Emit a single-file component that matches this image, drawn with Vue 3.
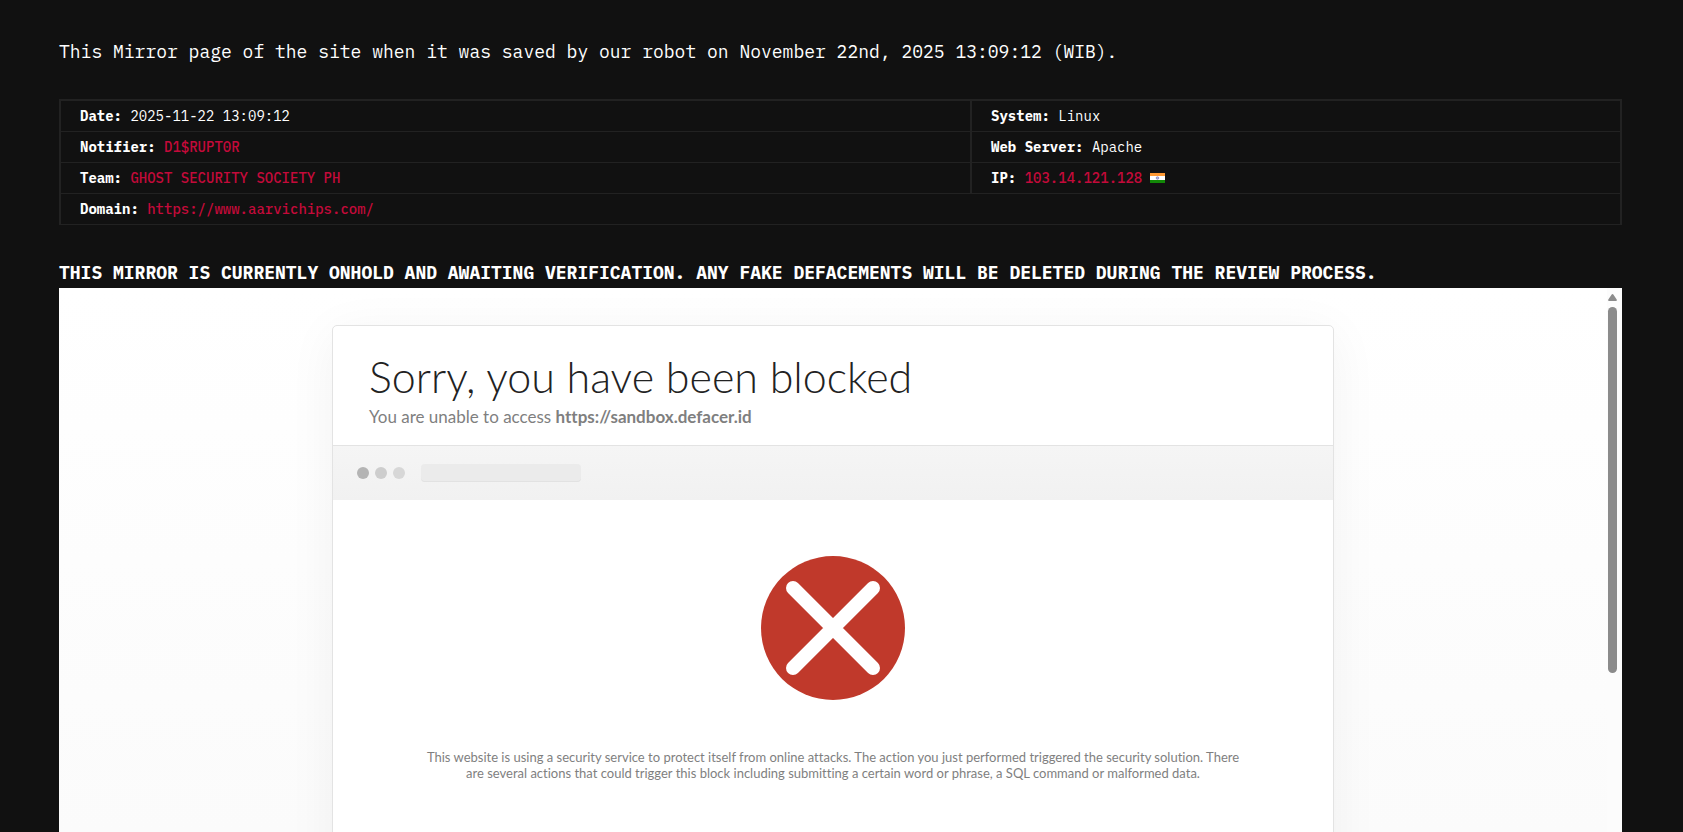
<script setup>
const rows = [
  [
    { label: 'Date:', value: '2025-11-22 13:09:12' },
    { label: 'System:', value: 'Linux' },
  ],
  [
    { label: 'Notifier:', value: 'D1$RUPT0R', link: true },
    { label: 'Web Server:', value: 'Apache' },
  ],
  [
    { label: 'Team:', value: 'GHOST SECURITY SOCIETY PH', link: true },
    { label: 'IP:', value: '103.14.121.128', link: true, flag: true },
  ],
  [{ label: 'Domain:', value: 'https://www.aarvichips.com/', link: true }],
]
</script>

<template>
  <main class="page">
    <p class="intro">This Mirror page of the site when it was saved by our robot on November 22nd, 2025 13:09:12 (WIB).</p>

    <table class="info">
      <colgroup>
        <col class="col-main" />
        <col />
      </colgroup>
      <tbody>
        <tr v-for="(row, i) in rows" :key="i">
          <td v-for="cell in row" :key="cell.label" :colspan="row.length === 1 ? 2 : 1">
            <strong>{{ cell.label }}</strong>{{ ' ' }}<a v-if="cell.link" href="#">{{ cell.value }}</a><span v-else>{{ cell.value }}</span>
            <svg v-if="cell.flag" class="flag" viewBox="0 0 15 10" role="img" aria-label="India">
              <rect width="15" height="10" fill="#fff" />
              <rect width="15" height="3" fill="#ff9933" />
              <rect y="7" width="15" height="3" fill="#128807" />
              <circle cx="7.5" cy="5" r="1.3" fill="#b4b4dc" stroke="#7272b5" stroke-width=".6" />
            </svg>
          </td>
        </tr>
      </tbody>
    </table>

    <p class="notice">THIS MIRROR IS CURRENTLY ONHOLD AND AWAITING VERIFICATION. ANY FAKE DEFACEMENTS WILL BE DELETED DURING THE REVIEW PROCESS.</p>

    <section class="frame">
      <div class="view">
        <article class="card">
          <header class="head">
            <h1>Sorry, you have been blocked</h1>
            <h2>You are unable to access <strong>https://sandbox.defacer.id</strong></h2>
          </header>
          <div class="bar">
            <i class="dot dark"></i>
            <i class="dot mid"></i>
            <i class="dot"></i>
            <span class="address"></span>
          </div>
          <div class="body">
            <svg class="cross" viewBox="0 0 144 144" aria-hidden="true">
              <circle cx="72" cy="72" r="72" fill="#c0392b" />
              <path d="M32 32L112 112M112 32L32 112" stroke="#fff" stroke-width="14" stroke-linecap="round" />
            </svg>
            <p>This website is using a security service to protect itself from online attacks. The action you just performed triggered the security solution. There are several actions that could trigger this block including submitting a certain word or phrase, a SQL command or malformed data.</p>
          </div>
        </article>
      </div>
      <div class="scroll" aria-hidden="true">
        <svg viewBox="0 0 9 7"><path d="M4.5 0Q5.1 0 5.5.7L8.7 5.5Q9.3 7 8 7H1Q-.3 7 .3 5.5L3.5.7Q3.9 0 4.5 0Z" fill="#8b8b8b" /></svg>
        <div class="thumb"></div>
      </div>
    </section>
  </main>
</template>

<style>
body {
  margin: 0;
  background: #111;
}
</style>

<style scoped>
.page {
  box-sizing: border-box;
  height: 100vh;
  padding: 40px 61px 0 59px;
  display: flex;
  flex-direction: column;
  overflow: hidden;
  color: #fff;
  font-family: "IBM Plex Mono", "Liberation Mono", monospace;
}
.intro,
.notice {
  margin: 0;
  font-size: 18px;
  line-height: 24px;
}
.notice {
  margin: 36px 0 3px;
  font-weight: 700;
}
.info {
  width: 100%;
  margin-top: 35px;
  table-layout: fixed;
  border-collapse: separate;
  border-spacing: 0;
  border: 1px solid #222;
  border-bottom: 0;
  font-size: 14px;
  line-height: 20px;
}
.col-main {
  width: 58.3%;
}
.info td {
  padding: 5px 19px;
  border: 1px solid #222;
  border-top: 0;
}
.info tr:first-child td {
  border-top: 1px solid #222;
}
.info td:first-child:not([colspan="2"]) {
  border-right: 0;
}
.info td + td {
  border-left-width: 2px;
}
a {
  color: #c40a3a;
  font-weight: 500;
  text-decoration: none;
}
.flag {
  width: 15px;
  height: 10px;
  margin-left: 8px;
}
.frame {
  flex: 1;
  min-height: 0;
  display: flex;
  overflow: hidden;
  background: linear-gradient(#fff, #fbfbfb);
  color: #7f7f7f;
  font-family: Lato, sans-serif;
  font-variant-ligatures: none;
}
.view {
  flex: 1;
  padding-top: 37px;
  overflow: hidden;
}
.card {
  box-sizing: border-box;
  max-width: 1002px;
  margin: 0 auto;
  border: 1px solid #e3e3e3;
  border-radius: 5px;
  background: #fff;
  box-shadow: 0 8px 50px rgba(0, 0, 0, 0.05);
}
.head {
  padding: 23px 36px 16px;
}
h1,
h2 {
  margin: 0;
  font-weight: 400;
}
h1 {
  color: #222;
  font-size: 43px;
  font-weight: 300;
  line-height: 56px;
}
h2 {
  font-size: 17px;
  line-height: 24px;
}
.bar {
  height: 54px;
  padding-left: 24px;
  display: flex;
  align-items: center;
  gap: 6px;
  border-top: 1px solid #e3e3e3;
  background: linear-gradient(#f5f5f5, #f1f1f1);
}
.dot {
  width: 12px;
  height: 12px;
  border-radius: 50%;
  background: #d7d7d7;
}
.dot.mid {
  background: #cdcdcd;
}
.dot.dark {
  background: #b4b4b4;
}
.address {
  width: 160px;
  height: 18px;
  margin-left: 10px;
  border-radius: 4px;
  background: #ebebeb;
  box-shadow: inset 0 -1px #e2e2e2;
}
.body {
  padding: 56px 90px 160px;
  text-align: center;
}
.cross {
  display: block;
  width: 144px;
  height: 144px;
  margin: 0 auto 49px;
}
.body p {
  margin: 0;
  font-size: 13px;
  line-height: 16px;
}
.scroll {
  width: 9px;
  padding: 6px 5px 0 1px;
  background: #fcfcfc;
}
.scroll svg {
  display: block;
  width: 9px;
  height: 7px;
}
.thumb {
  height: 68%;
  margin-top: 6px;
  border-radius: 5px;
  background: #8b8b8b;
}
</style>
